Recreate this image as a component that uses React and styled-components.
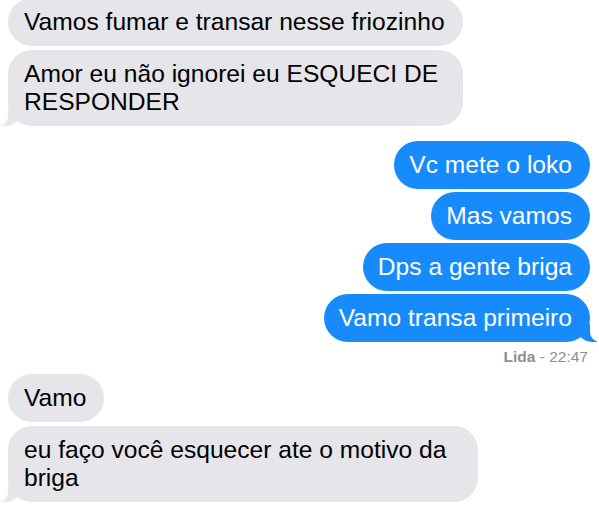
import React from 'react'
import styled, { createGlobalStyle, css } from 'styled-components'

const GlobalStyle = createGlobalStyle`
    html, body {
        margin: 0;
        padding: 0;
        background: #ffffff;
    }
    body {
        font-family: "Liberation Sans", Arial, sans-serif;
        -webkit-font-smoothing: antialiased;
    }
`

const Thread = styled.div`
    width: 599px;
    height: 515px;
    overflow: hidden;
    box-sizing: border-box;
    padding: 0 9px 0 8px;
    display: flex;
    flex-direction: column;
`

const Group = styled.div`
    display: flex;
    flex-direction: column;
    align-items: ${({ mine }) => (mine ? 'flex-end' : 'flex-start')};
    gap: ${({ mine }) => (mine ? '3px' : '4px')};
    margin-top: ${({ top }) => top}px;
`

const Bubble = styled.div`
    position: relative;
    box-sizing: border-box;
    max-width: ${({ wide }) => wide}px;
    padding: 10px 18px 10px 16px;
    border-radius: 24px;
    font-size: 24.6px;
    line-height: 28px;
    color: #000000;
    background-color: #e5e5ea;
    ${({ mine }) => mine && css`
        color: #ffffff;
        background-color: #178bfb;
        padding: 10px 18px 10px 15px;
    `}
    ${({ tail, mine }) => tail && css`
        &::before, &::after {
            content: "";
            position: absolute;
            bottom: -2px;
            height: 18px;
        }
        &::before {
            ${mine ? css`
                right: -7px;
                border-right: 20px solid #178bfb;
                border-bottom-left-radius: 16px 14px;
            ` : css`
                left: -7px;
                border-left: 20px solid #e5e5ea;
                border-bottom-right-radius: 16px 14px;
            `}
            transform: translate(0, -2px);
        }
        &::after {
            width: 12px;
            background-color: #ffffff;
            ${mine ? css`
                right: -12px;
                border-bottom-left-radius: 10px;
            ` : css`
                left: -12px;
                border-bottom-right-radius: 10px;
            `}
            transform: translate(0, -2px);
        }
    `}
`

const Receipt = styled.div`
    align-self: flex-end;
    margin: 3px 2px 0 0;
    font-size: 15.5px;
    line-height: 18px;
    color: #8e8e93;
    b {
        font-weight: 700;
    }
`

const thread = [
    {
        mine: false,
        top: -2,
        wide: 455,
        messages: [
            'Vamos fumar e transar nesse friozinho',
            'Amor eu não ignorei eu ESQUECI DE RESPONDER',
        ],
    },
    {
        mine: true,
        top: 15,
        wide: 560,
        messages: ['Vc mete o loko', 'Mas vamos', 'Dps a gente briga', 'Vamo transa primeiro'],
        receipt: { status: 'Lida', time: '22:47' },
    },
    {
        mine: false,
        top: 8,
        wide: 470,
        messages: ['Vamo', 'eu faço você esquecer ate o motivo da briga'],
    },
]

const App = () => {
    return (
        <>
            <GlobalStyle />
            <Thread>
                {thread.map((group, gi) => (
                    <Group key={gi} mine={group.mine} top={group.top}>
                        {group.messages.map((text, index) => (
                            <Bubble
                                key={index}
                                mine={group.mine}
                                wide={group.wide}
                                tail={index === group.messages.length - 1}
                            >
                                {text}
                            </Bubble>
                        ))}
                        {group.receipt && (
                            <Receipt>
                                <b>{group.receipt.status}</b> - {group.receipt.time}
                            </Receipt>
                        )}
                    </Group>
                ))}
            </Thread>
        </>
    )
}

export default App
